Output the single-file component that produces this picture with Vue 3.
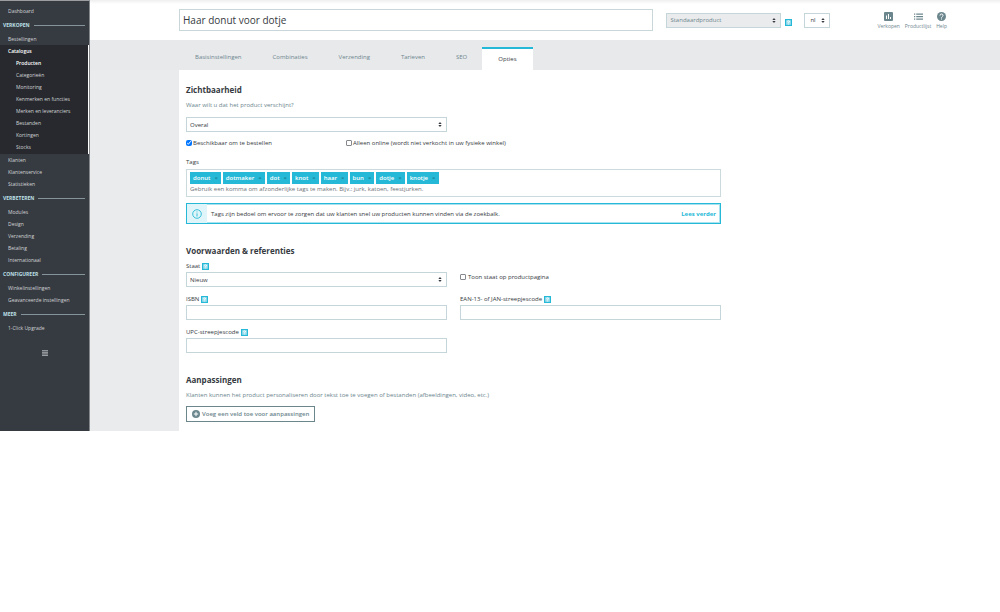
<script setup>
import { ref, h } from 'vue'

const nav = [
  { heading: 'VERKOPEN', items: ['Bestellingen', 'Catalogus', 'Klanten', 'Klantenservice', 'Statistieken'] },
  { heading: 'VERBETEREN', items: ['Modules', 'Design', 'Verzending', 'Betaling', 'Internationaal'] },
  { heading: 'CONFIGUREER', items: ['Winkelinstellingen', 'Geavanceerde instellingen'] },
  { heading: 'MEER', items: ['1-Click Upgrade'] },
]
const catalog = ['Producten', 'Categorieën', 'Monitoring', 'Kenmerken en functies', 'Merken en leveranciers', 'Bestanden', 'Kortingen', 'Stocks']
const tabs = ['Basisinstellingen', 'Combinaties', 'Verzending', 'Tarieven', 'SEO', 'Opties']
const activeTab = ref('Opties')
const title = ref('Haar donut voor dotje')
const tags = ref(['donut', 'dotmaker', 'dot', 'knot', 'haar', 'bun', 'dotje', 'knotje'])
const available = ref(true)
const onlineOnly = ref(false)
const showState = ref(false)

function removeTag(tag) {
  tags.value = tags.value.filter((t) => t !== tag)
}

const Arrows = () =>
  h('svg', { class: 'arrows', viewBox: '0 0 4 6', 'aria-hidden': 'true' }, [
    h('path', { d: 'M2 0L4 2.5H0ZM2 6L0 3.5H4Z', fill: 'currentColor' }),
  ])
const HelpBadge = () =>
  h('svg', { class: 'badge', viewBox: '0 0 7 7', 'aria-hidden': 'true' }, [
    h('rect', { width: 7, height: 7, fill: '#25b9d7' }),
    h('rect', { x: 1.2, y: 1.2, width: 4.6, height: 4.6, fill: '#a4e0ee' }),
    h('path', { d: 'M2.3 2.4Q3.5 1.2 4.6 2.3Q4.6 3.2 3.5 3.6V4.2M3.5 4.8V5.4', fill: 'none', stroke: '#fff', 'stroke-width': 0.9 }),
  ])
</script>

<template>
  <div class="page">
    <nav class="sidebar" aria-label="Hoofdmenu">
      <a class="item" href="#">Dashboard</a>
      <template v-for="group in nav" :key="group.heading">
        <div class="heading"><span>{{ group.heading }}</span></div>
        <template v-for="item in group.items" :key="item">
          <div v-if="item === 'Catalogus'" class="open">
            <a class="item strong" href="#">Catalogus</a>
            <a v-for="(sub, i) in catalog" :key="sub" class="item sub" :class="{ strong: i === 0 }" href="#">{{ sub }}</a>
          </div>
          <a v-else class="item" href="#">{{ item }}</a>
        </template>
      </template>
      <button class="collapse" type="button" aria-label="Menu inklappen">
        <svg viewBox="0 0 6 6"><path d="M0 .7H6M0 2.3H6M0 3.9H6M0 5.4H6" stroke="#b4b8bc" stroke-width=".9" /></svg>
      </button>
    </nav>

    <main class="main">
      <header class="header">
        <input v-model="title" class="title" type="text" aria-label="Productnaam" />
        <div class="select type">
          <select aria-label="Producttype" disabled><option>Standaardproduct</option></select>
          <Arrows />
        </div>
        <HelpBadge class="type-help" />
        <div class="select lang">
          <select aria-label="Taal"><option>nl</option></select>
          <Arrows />
        </div>
        <div class="tools">
          <a href="#">
            <svg viewBox="0 0 18 18"><path fill="currentColor" fill-rule="evenodd" d="M2 0H16Q18 0 18 2V16Q18 18 16 18H2Q0 18 0 16V2Q0 0 2 0ZM4 7V14H6V7ZM8 4V14H10V4ZM12 10V14H14V10Z" /></svg>
            <span>Verkopen</span>
          </a>
          <a href="#">
            <svg viewBox="0 0 18 18"><path fill="currentColor" d="M0 3H2.5V5.5H0ZM0 8H2.5V10.5H0ZM0 13H2.5V15.5H0ZM4.5 3H18V5.5H4.5ZM4.5 8H18V10.5H4.5ZM4.5 13H18V15.5H4.5Z" /></svg>
            <span>Productlijst</span>
          </a>
          <a href="#">
            <svg viewBox="0 0 18 18"><circle cx="9" cy="9" r="9" fill="currentColor" /><path d="M6 7.2Q6 4 9 4T12 7Q12 8.3 10.5 9.3T9 11.7M9 13V15" fill="none" stroke="#fff" stroke-width="2" /></svg>
            <span>Help</span>
          </a>
        </div>
      </header>

      <div class="tabs" role="tablist">
        <button v-for="tab in tabs" :key="tab" type="button" role="tab" :aria-selected="tab === activeTab" :class="{ active: tab === activeTab }" @click="activeTab = tab">{{ tab }}</button>
      </div>

      <form class="panel" @submit.prevent>
        <section>
          <h2>Zichtbaarheid</h2>
          <label class="hint" for="visibility">Waar wilt u dat het product verschijnt?</label>
          <div class="columns">
            <div class="select"><select id="visibility"><option>Overal</option></select><Arrows /></div>
          </div>
          <div class="checks">
            <label><input v-model="available" type="checkbox" />Beschikbaar om te bestellen</label>
            <label><input v-model="onlineOnly" type="checkbox" />Alleen online (wordt niet verkocht in uw fysieke winkel)</label>
          </div>
          <label class="tags-label" for="tags">Tags</label>
          <div class="tagbox">
            <div class="tags">
              <span v-for="tag in tags" :key="tag" class="tag">{{ tag }}<button type="button" :aria-label="'Verwijder ' + tag" @click="removeTag(tag)">×</button></span>
            </div>
            <input id="tags" type="text" placeholder="Gebruik een komma om afzonderlijke tags te maken. Bijv.: jurk, katoen, feestjurken." />
          </div>
          <div class="alert">
            <div class="alert-icon">
              <svg viewBox="0 0 10 10"><circle cx="5" cy="5" r="4.3" fill="none" stroke="#25b9d7" stroke-width=".9" /><path d="M5 2.5V3.4M5 4.3V7.5" stroke="#25b9d7" stroke-width=".9" /></svg>
            </div>
            <p>Tags zijn bedoel om ervoor te zorgen dat uw klanten snel uw producten kunnen vinden via de zoekbalk.</p>
            <a href="#">Lees verder</a>
          </div>
        </section>

        <section>
          <h2>Voorwaarden &amp; referenties</h2>
          <div class="columns fields">
            <div class="field">
              <label for="state">Staat <HelpBadge /></label>
              <div class="select"><select id="state"><option>Nieuw</option></select><Arrows /></div>
            </div>
            <div class="field show-state">
              <label><input v-model="showState" type="checkbox" />Toon staat op productpagina</label>
            </div>
            <div class="field">
              <label for="isbn">ISBN <HelpBadge /></label>
              <input id="isbn" type="text" />
            </div>
            <div class="field">
              <label for="ean">EAN-13- of JAN-streepjescode <HelpBadge /></label>
              <input id="ean" type="text" />
            </div>
            <div class="field">
              <label for="upc">UPC-streepjescode <HelpBadge /></label>
              <input id="upc" type="text" />
            </div>
          </div>
        </section>

        <section>
          <h2>Aanpassingen</h2>
          <p class="hint">Klanten kunnen het product personaliseren door tekst toe te voegen of bestanden (afbeeldingen, video, etc.)</p>
          <button class="add" type="button">
            <svg viewBox="0 0 8 8"><circle cx="4" cy="4" r="4" fill="#6c868e" /><path d="M4 1.8V6.2M1.8 4H6.2" stroke="#fff" stroke-width="1" /></svg>
            Voeg een veld toe voor aanpassingen
          </button>
        </section>
      </form>
    </main>
  </div>
</template>

<style>
body {
  margin: 0;
  background: #fff;
}
</style>

<style scoped>
.page,
.page :deep(*) {
  box-sizing: border-box;
}
.page {
  display: flex;
  font-family: 'Open Sans', sans-serif;
  font-size: 6px;
  line-height: 12px;
  color: #363a41;
  background: #eaebec;
}
a {
  color: inherit;
  text-decoration: none;
}
button,
input,
select {
  font: inherit;
  color: inherit;
  margin: 0;
}
h2,
p {
  margin: 0;
}
.sidebar {
  flex: none;
  display: flex;
  flex-direction: column;
  width: 90px;
  padding: 4px 0 72px;
  font-size: 5px;
  color: #d2d4d6;
  background: #363a41;
  border-top: 1px solid #9b9da0;
  border-right: 1px solid #84878c;
}
.item {
  display: block;
  height: 12px;
  padding-left: 8px;
}
.sub {
  padding-left: 16px;
}
.strong {
  color: #fff;
  font-weight: 600;
}
.open {
  padding-bottom: 1px;
  background: #27292e;
  border-right: 1px solid #fff;
}
.heading {
  display: flex;
  align-items: center;
  gap: 4px;
  height: 16px;
  padding: 0 4px 0 3px;
  color: #bee0e8;
  font-weight: 700;
}
.heading::after {
  content: '';
  flex: 1;
  height: 1px;
  background: #85939b;
}
.collapse {
  align-self: center;
  width: 6px;
  height: 6px;
  margin-top: 16px;
  padding: 0;
  border: 0;
  background: none;
}
.collapse svg {
  display: block;
}
.main {
  flex: 1;
  min-width: 0;
}
.header {
  display: flex;
  align-items: center;
  height: 40px;
  padding: 0 53px 0 89px;
  background: linear-gradient(#eee, #f7f7f7 2px, #fff 4px);
}
.title {
  flex: 1;
  min-width: 0;
  height: 22px;
  padding: 0 3px;
  font-size: 10px;
  border: 1px solid #c9d7da;
  background: #fff;
}
.select {
  position: relative;
  height: 15px;
  color: #363a41;
}
.select select {
  display: block;
  width: 100%;
  height: 100%;
  padding: 0 3px;
  appearance: none;
  border: 1px solid #c5d6da;
  border-radius: 0;
  background: #fff;
  opacity: 1;
}
.select :deep(.arrows) {
  position: absolute;
  top: 5px;
  right: 5px;
  width: 4px;
  height: 5px;
  pointer-events: none;
}
.select.type {
  width: 115px;
  margin-left: 13px;
}
.select.type select {
  color: #6c868e;
  background: #eaebec;
}
.type-help {
  margin: 4px 12px 0 4px;
}
.lang {
  width: 26px;
}
.select.lang select {
  padding: 0 5px;
}
.page :deep(.badge) {
  flex: none;
  width: 7px;
  height: 7px;
}
.tools {
  display: flex;
  gap: 5px;
  margin-left: 47px;
  padding-top: 1px;
  color: #6c868e;
  font-size: 5px;
  line-height: 8px;
}
.tools a {
  display: flex;
  flex-direction: column;
  align-items: center;
  gap: 1px;
}
.tools svg {
  width: 9px;
  height: 9px;
}
.tabs {
  display: flex;
  height: 30px;
  padding: 7px 0 0 89px;
  background: #e8e9eb;
}
.tabs button {
  padding: 0 15px 3px 16px;
  border: 0;
  color: #6c868e;
  background: none;
}
.tabs .active {
  padding: 0 16px 1px;
  color: #363a41;
  background: #fff;
  border-top: 2px solid #25b9d7;
}
.panel {
  display: flex;
  flex-direction: column;
  gap: 21px;
  margin-left: 89px;
  padding: 14px 279px 9px 7px;
  background: #fff;
}
h2 {
  font-size: 8px;
  line-height: 12px;
  font-weight: 700;
}
.hint {
  display: block;
  margin: 3px 0 5px;
  color: #6c868e;
}
.columns {
  display: grid;
  grid-template-columns: 1fr 1fr;
  gap: 6px 13px;
}
.hint + .columns {
  padding-top: 1px;
}
.checks {
  display: flex;
  margin-top: 5px;
}
.checks label {
  flex: 0 0 160px;
  white-space: nowrap;
}
.checks label,
.show-state label {
  display: flex;
  align-items: center;
  gap: 1px;
}
input[type='checkbox'] {
  flex: none;
  width: 6px;
  height: 6px;
}
input[type='checkbox']:not(:checked) {
  appearance: none;
  border: 1px solid #85888c;
  border-radius: 1px;
  background: #fff;
}
.tags-label {
  display: block;
  margin-top: 7px;
}
.tagbox {
  height: 28px;
  margin-top: 1px;
  padding: 2px 3px;
  border: 1px solid #cbdadd;
}
.tags {
  display: flex;
  gap: 2px;
}
.tag {
  display: flex;
  padding: 0 3px;
  color: #fff;
  font-weight: 600;
  background: #25b9d7;
}
.tag button {
  margin-left: 4px;
  padding: 0;
  border: 0;
  color: #1a7f94;
  background: none;
}
.tagbox input {
  display: block;
  width: 100%;
  height: 10px;
  padding: 0;
  border: 0;
  background: none;
}
.tagbox input::placeholder {
  color: #6d7378;
}
.alert {
  display: flex;
  align-items: center;
  height: 21px;
  margin-top: 6px;
  border: 1px solid #25b9d7;
  box-shadow: inset 0 0 0 1px #a8e3ef;
}
.alert-icon {
  display: grid;
  place-items: center;
  width: 20px;
  height: 100%;
  background: #dff5f9;
}
.alert svg {
  width: 10px;
  height: 10px;
}
.alert p {
  flex: 1;
  padding-left: 4px;
}
.alert a {
  padding-right: 4px;
  color: #25b9d7;
  font-weight: 700;
}
.fields {
  margin-top: 3px;
}
.field > label {
  display: flex;
  align-items: center;
  gap: 2px;
}
.field input[type='text'] {
  display: block;
  width: 100%;
  height: 15px;
  border: 1px solid #c5d6da;
  background: #fff;
}
.show-state {
  padding-top: 11px;
}
.add {
  display: flex;
  align-items: center;
  gap: 2px;
  height: 16px;
  padding: 0 5px;
  color: #6c868e;
  font-weight: 600;
  border: 1px solid #6c868e;
  background: #fff;
}
.add svg {
  width: 8px;
  height: 8px;
}
</style>
